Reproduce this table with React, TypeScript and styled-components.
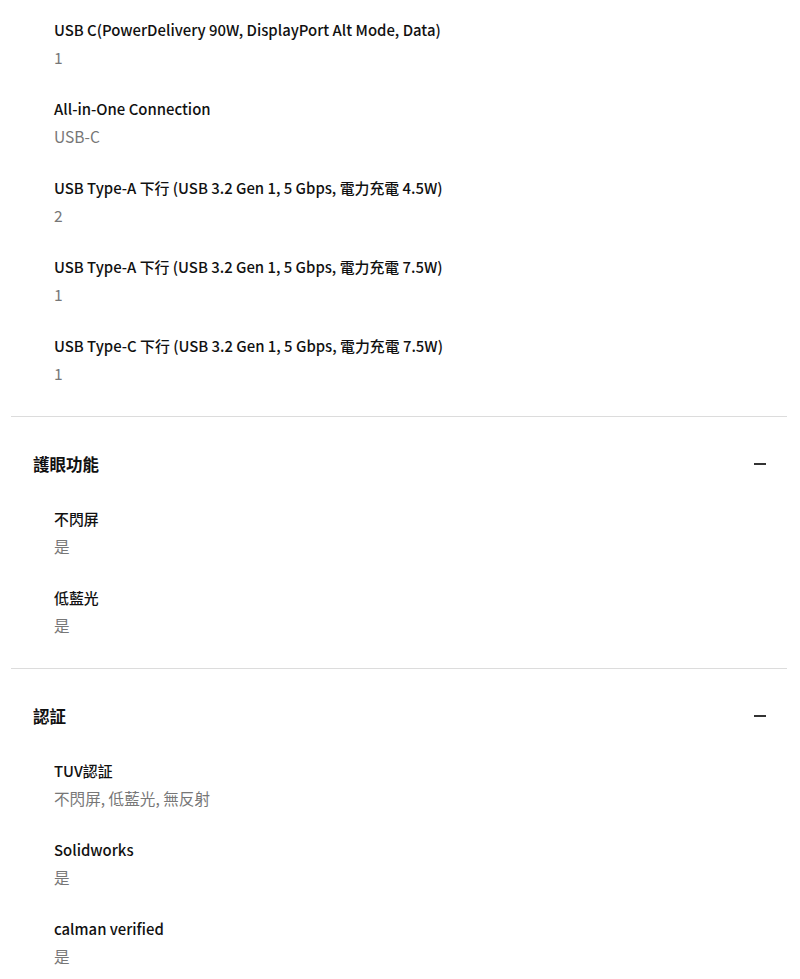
import React from "react";
import styled, { createGlobalStyle } from "styled-components";

const Global = createGlobalStyle`
  html, body { margin: 0; padding: 0; background: #fff; }
  body { font-family: "Noto Sans CJK TC", "Noto Sans", sans-serif; color: #111; }
`;

const Page = styled.div`
  padding: 16px 13px 0 11px;
`;

const Section = styled.section<{ $first?: boolean }>`
  border-top: ${(p) => (p.$first ? "none" : "1px solid #dcdcdc")};
  padding-top: ${(p) => (p.$first ? "0" : "31px")};
  padding-bottom: 5px;
`;

const Header = styled.div`
  display: flex;
  align-items: center;
  justify-content: space-between;
  padding: 0 21px 0 22px;
  height: 32px;
  margin-bottom: 25px;
`;

const Title = styled.h3`
  margin: 0;
  font-size: 16.5px;
  font-weight: 700;
  line-height: 32px;
  color: #111;
`;

const Minus = styled.span`
  display: block;
  width: 12px;
  height: 2px;
  background: #333;
`;

const List = styled.dl`
  margin: 0;
  padding: 0 0 0 43px;
`;

const Item = styled.div`
  margin-bottom: 25px;
`;

const Label = styled.dt`
  font-size: 14.9px;
  font-weight: 500;
  line-height: 28px;
  color: #111;
`;

const Value = styled.dd`
  margin: 0;
  font-size: 15.6px;
  font-weight: 400;
  line-height: 26px;
  color: #777;
`;

type Spec = { label: string; value: string };

const usb: Spec[] = [
  { label: "USB C(PowerDelivery 90W, DisplayPort Alt Mode, Data)", value: "1" },
  { label: "All-in-One Connection", value: "USB-C" },
  { label: "USB Type-A 下行 (USB 3.2 Gen 1, 5 Gbps, 電力充電 4.5W)", value: "2" },
  { label: "USB Type-A 下行 (USB 3.2 Gen 1, 5 Gbps, 電力充電 7.5W)", value: "1" },
  { label: "USB Type-C 下行 (USB 3.2 Gen 1, 5 Gbps, 電力充電 7.5W)", value: "1" },
];

const eye: Spec[] = [
  { label: "不閃屏", value: "是" },
  { label: "低藍光", value: "是" },
];

const cert: Spec[] = [
  { label: "TUV認証", value: "不閃屏, 低藍光, 無反射" },
  { label: "Solidworks", value: "是" },
  { label: "calman verified", value: "是" },
];

const Specs = ({ items }: { items: Spec[] }) => (
  <List>
    {items.map((s, i) => (
      <Item key={i}>
        <Label>{s.label}</Label>
        <Value>{s.value}</Value>
      </Item>
    ))}
  </List>
);

export default function App() {
  return (
    <>
      <Global />
      <Page>
        <Section $first>
          <Specs items={usb} />
        </Section>
        <Section>
          <Header>
            <Title>護眼功能</Title>
            <Minus />
          </Header>
          <Specs items={eye} />
        </Section>
        <Section>
          <Header>
            <Title>認証</Title>
            <Minus />
          </Header>
          <Specs items={cert} />
        </Section>
      </Page>
    </>
  );
}
